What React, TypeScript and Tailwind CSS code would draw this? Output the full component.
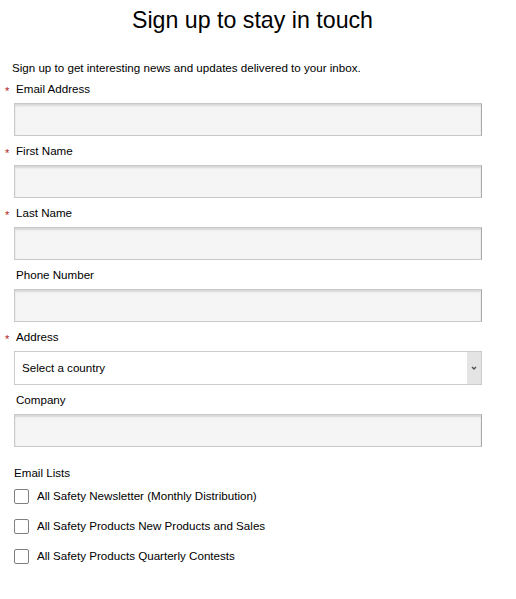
import { useId } from 'react';

type FieldProps = {
  label: string;
  required?: boolean;
};

function Label({ label, required, htmlFor }: FieldProps & { htmlFor: string }) {
  return (
    <label className="relative flex h-4 items-center pl-[16px] text-[11.6px] leading-4 text-black" htmlFor={htmlFor}>
      {required && (
        <span className="absolute left-[5px] top-[5px] text-[11px] leading-none text-[#b22222]">*</span>
      )}
      {label}
    </label>
  );
}

function TextField({ label, required }: FieldProps) {
  const id = useId();
  return (
    <div className="flex flex-col gap-[6px]">
      <Label htmlFor={id} label={label} required={required} />
      <input
        className="ml-[14px] h-[33px] w-[468px] border border-[#c9c9c9] border-r-[#a9a9a9] bg-[#f5f5f5] px-2 text-[12px] shadow-[inset_0_2px_2px_rgba(0,0,0,0.12)] outline-none"
        id={id}
        type="text"
      />
    </div>
  );
}

function CountryField() {
  const id = useId();
  return (
    <div className="flex flex-col gap-[6px]">
      <Label htmlFor={id} label="Address" required />
      <div className="ml-[14px] flex h-[34px] w-[468px] items-stretch border border-[#cccccc] bg-white">
        <div className="flex flex-1 items-center pl-[7px] text-[11.6px] text-black" id={id}>
          Select a country
        </div>
        <div className="flex w-[14px] items-center justify-center bg-[#e4e4e4]">
          <svg className="h-[6px] w-[6px] text-[#555]" fill="none" stroke="currentColor" strokeWidth="1.5" viewBox="0 0 6 6">
            <path d="M1 2l2 2 2-2" />
          </svg>
        </div>
      </div>
    </div>
  );
}

function ListOption({ label }: { label: string }) {
  const id = useId();
  return (
    <label className="flex h-[18px] items-center gap-[8px] pl-[14px] text-[11.6px] text-black" htmlFor={id}>
      <input
        className="h-[15px] w-[15px] appearance-none rounded-[2px] border border-[#808080] bg-white"
        id={id}
        type="checkbox"
      />
      {label}
    </label>
  );
}

export default function App() {
  return (
    <div className="w-[516px] bg-white font-['Liberation_Sans',Arial,sans-serif] text-black">
      <div className="w-[505px] pt-[5px] text-center text-[23.2px] leading-[30px]">Sign up to stay in touch</div>
      <p className="mt-[25px] pl-[12px] text-[11.6px] leading-4">
        Sign up to get interesting news and updates delivered to your inbox.
      </p>
      <div className="mt-[5px] flex flex-col gap-[7px]">
        <TextField label="Email Address" required />
        <TextField label="First Name" required />
        <TextField label="Last Name" required />
        <TextField label="Phone Number" />
        <CountryField />
        <TextField label="Company" />
      </div>
      <div className="mt-[18px] pl-[14px] text-[11.6px] leading-4">Email Lists</div>
      <div className="mt-[6px] flex flex-col gap-[12px] pb-10">
        <ListOption label="All Safety Newsletter (Monthly Distribution)" />
        <ListOption label="All Safety Products New Products and Sales" />
        <ListOption label="All Safety Products Quarterly Contests" />
      </div>
    </div>
  );
}
